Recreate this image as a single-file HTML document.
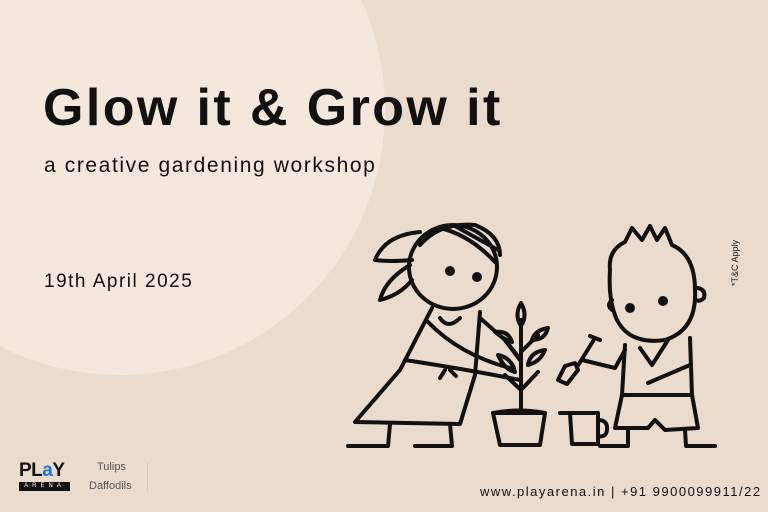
<!DOCTYPE html>
<html><head><meta charset="utf-8"><style>
html,body{margin:0;padding:0}
body{width:768px;height:512px;overflow:hidden;background:#eadbcc;position:relative;font-family:"Liberation Sans",sans-serif}
.circ{position:absolute;left:-145px;top:-155px;width:530px;height:530px;border-radius:50%;background:#f4e8dc}
h1{position:absolute;left:43px;top:78px;margin:0;font-size:52px;font-weight:700;color:#111;letter-spacing:2.4px;white-space:nowrap}
.sub{position:absolute;left:44px;top:154px;font-size:21px;color:#111;letter-spacing:1.6px;white-space:nowrap}
.date{position:absolute;left:44px;top:271px;font-size:19px;color:#111;letter-spacing:1.5px}
.web{position:absolute;left:480px;top:484px;font-size:13px;color:#111;letter-spacing:1.5px;white-space:nowrap}
.tc{position:absolute;left:712px;top:258px;font-size:9px;color:#222;transform:rotate(-90deg);transform-origin:center;white-space:nowrap}
</style></head><body>
<div class="circ"></div>
<h1>Glow it &amp; Grow it</h1>
<div class="sub">a creative gardening workshop</div>
<div class="date">19th April 2025</div>
<div class="tc">*T&amp;C Apply</div>
<div class="web">www.playarena.in | +91 9900099911/22</div>
<div style="position:absolute;left:19px;top:460px;font-weight:900;font-size:19px;letter-spacing:-0.5px;color:#111">PL<span style="color:#1a73e8">a</span>Y</div>
<div style="position:absolute;left:19px;top:482px;width:51px;height:9px;background:#111;color:#fff;font-size:6px;letter-spacing:4px;text-align:center;line-height:9px">ARENA</div>
<div style="position:absolute;left:97px;top:461px;font-size:11px;color:#555">Tulips</div>
<div style="position:absolute;left:89px;top:480px;font-size:11px;color:#555">Daffodils</div>
<div style="position:absolute;left:147px;top:462px;width:1px;height:30px;background:#d8c8b8"></div>
<svg width="768" height="512" style="position:absolute;left:0;top:0" fill="none" stroke="#111" stroke-width="4" stroke-linecap="round" stroke-linejoin="round">
<ellipse cx="453" cy="267" rx="44" ry="42"/>
<path d="M420 245 Q440 222 475 225 Q500 235 500 255"/>
<path d="M440 228 Q470 235 495 262 M455 226 Q480 240 498 250"/>
<path d="M412 260 Q390 262 375 260 Q385 235 420 232"/>
<path d="M410 265 Q385 280 380 300 Q400 295 412 280"/>
<circle cx="450" cy="271" r="3" fill="#111"/><circle cx="477" cy="277" r="3" fill="#111"/>
<path d="M432 308 L400 370 L355 422 L460 424 L475 375 L480 312"/>
<path d="M440 318 Q448 330 460 318"/>
<path d="M428 322 Q460 355 510 368"/>
<path d="M405 360 Q470 370 520 380 M445 370 L440 378 M450 370 L456 376"/>
<path d="M480 318 L505 340 L520 360"/>
<path d="M390 424 L388 446 L348 446 M450 424 L452 446 L415 446"/>
<path d="M521 410 L521 320 M521 390 L505 375 M521 390 L538 372 M521 360 L505 340 M521 352 L538 335"/>
<path d="M521 303 Q514 315 521 326 Q528 315 521 303Z"/>
<path d="M498 355 Q505 370 515 372 Q512 358 498 355Z M545 350 Q530 352 528 365 Q540 362 545 350Z M495 332 Q505 340 512 342 Q508 330 495 332Z M548 328 Q535 330 532 340 Q545 340 548 328Z"/>
<path d="M493 413 L545 413 L540 445 L500 445 Z M493 413 Q519 408 545 413"/>
<path d="M560 413 L598 413 L598 444 L572 444 L570 413 M598 420 Q608 420 607 430 Q606 438 598 436"/>
<path d="M595 338 L577 367 M590 336 L600 340 M575 363 L565 366 L558 380 L567 384 L578 370Z"/>
<path d="M610 270 Q608 250 625 242 L632 228 L642 240 L650 226 L657 240 L665 228 L672 245 Q695 255 695 290 Q697 330 665 340 Q630 345 617 320 Q608 300 610 270Z"/>
<path d="M698 288 Q706 290 704 298 Q700 302 696 300 M612 300 Q606 305 612 310"/>
<circle cx="630" cy="308" r="3" fill="#111"/><circle cx="663" cy="301" r="3" fill="#111"/>
<path d="M625 345 L622 395 L692 395 L690 338"/>
<path d="M640 348 L652 365 L668 340 M648 383 L690 365"/>
<path d="M625 350 L615 368 L582 360"/>
<path d="M622 395 L615 428 L648 428 L655 420 L665 430 L698 428 L692 395"/>
<path d="M628 428 L628 446 L600 446 M685 430 L686 446 L715 446"/>
</svg>
</body></html>
